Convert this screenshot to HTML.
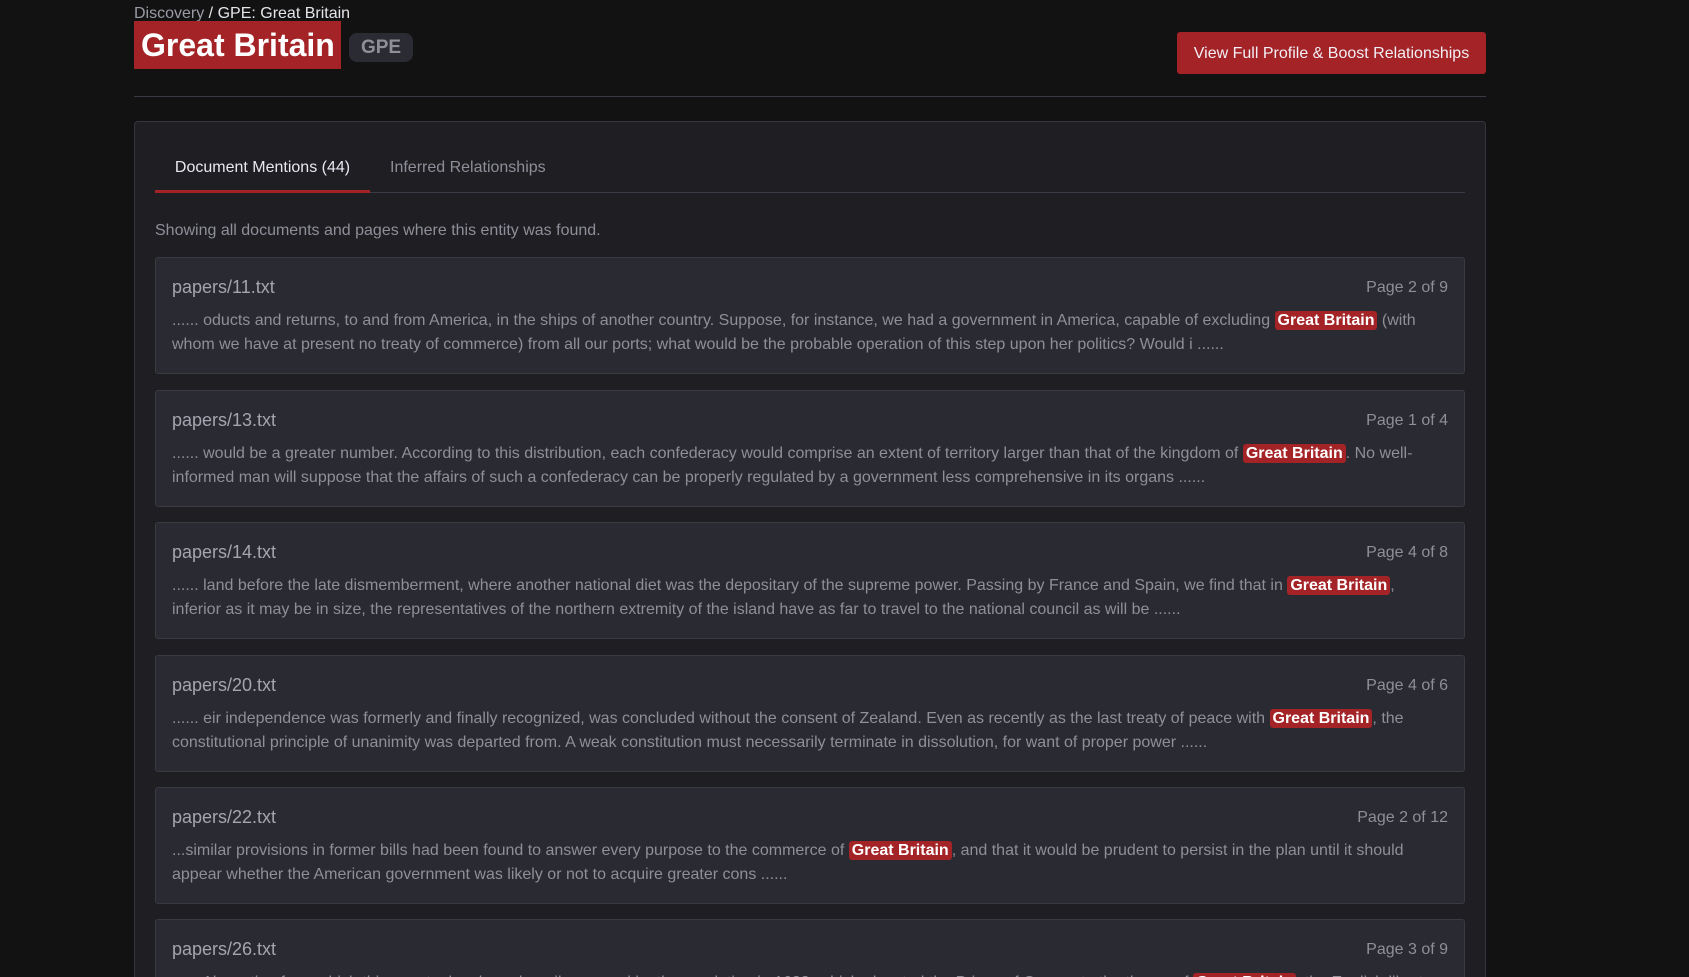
<!DOCTYPE html>
<html><head><meta charset="utf-8"><style>
*{box-sizing:border-box;margin:0;padding:0}
html,body{width:1689px;height:977px;overflow:hidden}
body{background:#121213;font-family:"Liberation Sans",sans-serif;color:#9a9ba4;position:relative}
.wrap{position:absolute;left:134px;width:1352px;top:0;height:977px;overflow:hidden}
.bc{position:absolute;top:4px;left:0;font-size:16px;color:#e6e6ea;line-height:20px;white-space:nowrap}
.bc span{color:#9a9ba4}
.title{position:absolute;top:21px;left:0;height:48px;width:207px;background:#a32326;color:#fff;font-weight:bold;font-size:32px;line-height:48px;padding-left:7px;white-space:nowrap;overflow:hidden}
.badge{position:absolute;top:33px;left:215px;width:64px;height:29px;background:#2b2c33;border-radius:8px;color:#8e8f98;font-weight:bold;font-size:19px;line-height:29px;text-align:center}
.btn{position:absolute;left:1043px;top:32px;width:309px;height:42px;background:#a32326;border-radius:3px;color:#f2eef5;font-size:16px;line-height:43px;text-align:center}
.hr{position:absolute;top:96px;left:0;width:1352px;height:1px;background:#3a3a44}
.panel{position:absolute;top:121px;left:0;width:1352px;height:856px;overflow:hidden;background:#1e1e23;border:1px solid #34353d;border-bottom:none;border-radius:4px 4px 0 0}
.tabs{position:absolute;top:0;left:20px;right:20px;height:71px;border-bottom:1px solid #3a3b44}
.tab{position:absolute;top:36px;font-size:16px;line-height:20px;white-space:nowrap}
.t1{left:0;width:215px;height:35px;text-align:center;color:#e8e8f0;border-bottom:3px solid #a32326}
.t2{left:235px;color:#8e8f98}
.desc{position:absolute;top:99px;left:20px;font-size:16px;color:#8e8f98;line-height:20px}
.card{position:absolute;left:20px;width:1310px;height:117px;background:#292a32;border:1px solid #393a42;border-radius:3px;padding:16px 16px 0}
.hd{height:27px;line-height:27px;font-size:18px;display:flex;justify-content:space-between;color:#a4a5b0}
.hd .pg{color:#8e8f98;font-size:16px}
.tx{margin-top:8px;font-size:16px;line-height:24px;color:#8e8f98}
mark{background:#a32326;color:#fff;font-weight:bold;padding:1px 3px;border-radius:3px}
</style></head><body>
<div class="wrap">
<div class="bc"><span>Discovery</span> / GPE: Great Britain</div>
<div class="title">Great Britain</div>
<div class="badge">GPE</div>
<div class="btn">View Full Profile &amp; Boost Relationships</div>
<div class="hr"></div>
<div class="panel">
<div class="tabs"><div class="tab t1">Document Mentions (44)</div><div class="tab t2">Inferred Relationships</div></div>
<div class="desc">Showing all documents and pages where this entity was found.</div>
<div class="card" style="top:135px"><div class="hd"><span>papers/11.txt</span><span class="pg">Page 2 of 9</span></div><div class="tx">...... oducts and returns, to and from America, in the ships of another country. Suppose, for instance, we had a government in America, capable of excluding <mark>Great Britain</mark> (with whom we have at present no treaty of commerce) from all our ports; what would be the probable operation of this step upon her politics? Would i ......</div></div>
<div class="card" style="top:268px"><div class="hd"><span>papers/13.txt</span><span class="pg">Page 1 of 4</span></div><div class="tx">...... would be a greater number. According to this distribution, each confederacy would comprise an extent of territory larger than that of the kingdom of <mark>Great Britain</mark>. No well-informed man will suppose that the affairs of such a confederacy can be properly regulated by a government less comprehensive in its organs ......</div></div>
<div class="card" style="top:400px"><div class="hd"><span>papers/14.txt</span><span class="pg">Page 4 of 8</span></div><div class="tx">...... land before the late dismemberment, where another national diet was the depositary of the supreme power. Passing by France and Spain, we find that in <mark>Great Britain</mark>, inferior as it may be in size, the representatives of the northern extremity of the island have as far to travel to the national council as will be ......</div></div>
<div class="card" style="top:533px"><div class="hd"><span>papers/20.txt</span><span class="pg">Page 4 of 6</span></div><div class="tx">...... eir independence was formerly and finally recognized, was concluded without the consent of Zealand. Even as recently as the last treaty of peace with <mark>Great Britain</mark>, the constitutional principle of unanimity was departed from. A weak constitution must necessarily terminate in dissolution, for want of proper power ......</div></div>
<div class="card" style="top:665px"><div class="hd"><span>papers/22.txt</span><span class="pg">Page 2 of 12</span></div><div class="tx">...similar provisions in former bills had been found to answer every purpose to the commerce of <mark>Great Britain</mark>, and that it would be prudent to persist in the plan until it should appear whether the American government was likely or not to acquire greater cons ......</div></div>
<div class="card" style="top:797px"><div class="hd"><span>papers/26.txt</span><span class="pg">Page 3 of 9</span></div><div class="tx">...... Aberration from which this country has been happily rescued by the revolution in 1688, which elevated the Prince of Orange to the throne of <mark>Great Britain</mark>, the English liberty was completely triumphant and the powers of the crown were reduced ......</div></div>
</div>
</div>
</body></html>
